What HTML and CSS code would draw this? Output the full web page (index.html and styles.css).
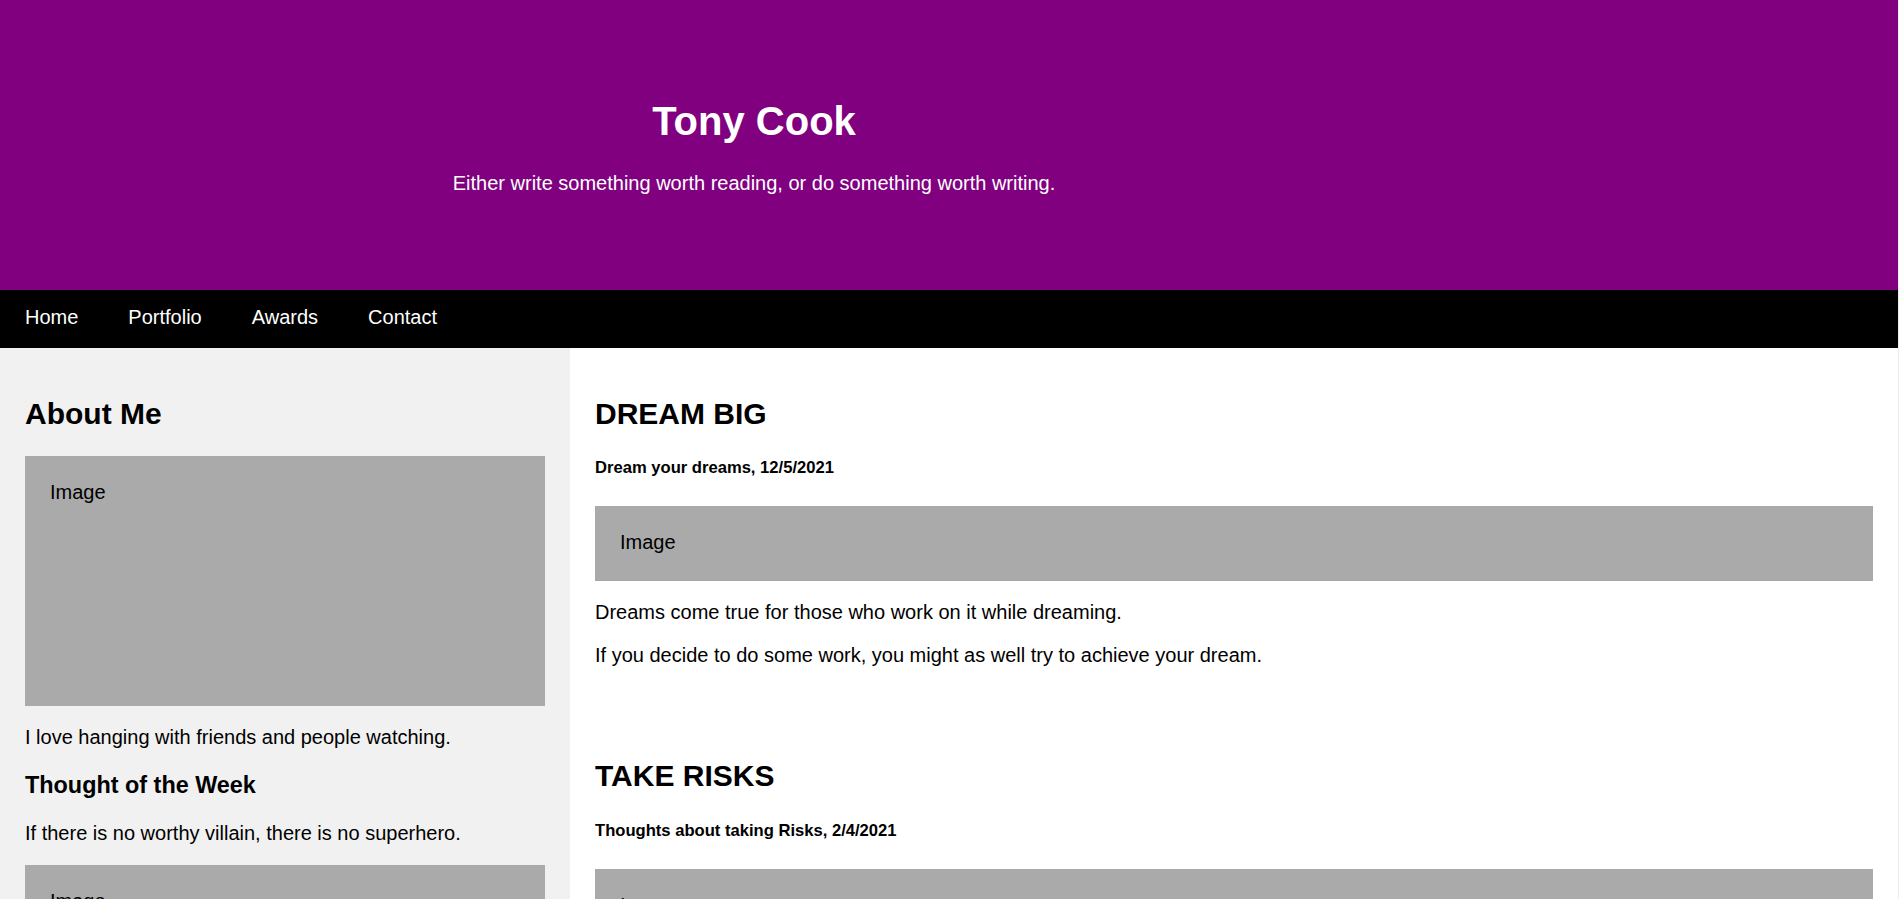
FILE: index.html
```html
<!DOCTYPE html>
<html lang="en">
<head>
<meta charset="utf-8">
<title>Tony Cook</title>
<link rel="stylesheet" href="styles.css">
</head>
<body>
  <header class="site-header">
    <div class="header-inner">
      <h1 class="site-title">Tony Cook</h1>
      <p class="site-tagline">Either write something worth reading, or do something worth writing.</p>
    </div>
  </header>
  <nav class="topnav">
    <a href="#">Home</a>
    <a href="#">Portfolio</a>
    <a href="#">Awards</a>
    <a href="#">Contact</a>
  </nav>
  <main class="layout">
    <aside class="side-col">
      <h2 class="section-title">About Me</h2>
      <div class="fakeimg fakeimg-tall">Image</div>
      <p class="text">I love hanging with friends and people watching.</p>
      <h3 class="sub-title">Thought of the Week</h3>
      <p class="text">If there is no worthy villain, there is no superhero.</p>
      <div class="fakeimg fakeimg-tall">Image</div>
    </aside>
    <section class="main-col">
      <article class="post">
        <h2 class="section-title">DREAM BIG</h2>
        <h5 class="post-meta">Dream your dreams, 12/5/2021</h5>
        <div class="fakeimg">Image</div>
        <p class="text">Dreams come true for those who work on it while dreaming.</p>
        <p class="text">If you decide to do some work, you might as well try to achieve your dream.</p>
      </article>
      <article class="post">
        <h2 class="section-title">TAKE RISKS</h2>
        <h5 class="post-meta">Thoughts about taking Risks, 2/4/2021</h5>
        <div class="fakeimg">Image</div>
        <p class="text">Take risks in your life. If you win, you can lead; if you lose, you can guide.</p>
      </article>
    </section>
  </main>
</body>
</html>
```
FILE: styles.css
```css
* {
  box-sizing: border-box;
}

html {
  overflow: hidden;
}

body {
  margin: 0;
  font-family: "Liberation Sans", Arial, sans-serif;
  font-size: 20px;
  line-height: normal;
  color: #000;
  background: #fff;
  width: 1899px;
  border-right: 1px solid #ececec;
}

.site-header {
  height: 290px;
  padding-top: 3px;
  background: #800080;
  color: #fff;
  display: flex;
  align-items: center;
}

.header-inner {
  width: 1508px;
  text-align: center;
}

.site-title {
  margin: 0 0 28px;
  font-size: 40px;
  font-weight: bold;
}

.site-tagline {
  margin: 0;
  font-size: 20px;
}

.topnav {
  display: flex;
  background: #000;
}

.topnav a {
  display: block;
  color: #fff;
  text-decoration: none;
  font-size: 20px;
  line-height: 23px;
  padding: 16px 25px 18.5px;
}

.layout {
  display: grid;
  grid-template-columns: 570px 1fr;
}

.side-col {
  background: #f1f1f1;
  padding: 25px;
}

.main-col {
  background: #fff;
  padding: 25px;
}

.post {
  display: flow-root;
}

.post + .post {
  margin-top: 48px;
}

.section-title {
  font-size: 30px;
  font-weight: bold;
  margin: 24.2px 0 24.9px;
}

.sub-title {
  font-size: 23.4px;
  font-weight: bold;
  margin: 23.4px 0;
}

.post-meta {
  font-size: 16.6px;
  font-weight: bold;
  margin: 27.7px 0;
}

.text {
  margin: 20px 0;
}

.fakeimg {
  background: #aaa;
  padding: 25px 25px 27px;
  width: 100%;
}

.fakeimg-tall {
  height: 250px;
}
```
